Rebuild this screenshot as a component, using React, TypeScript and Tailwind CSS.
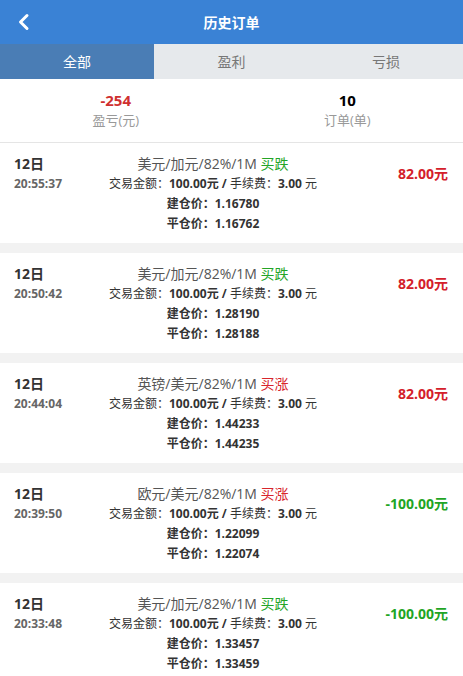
import React from 'react';

type Order = {
  time: string;
  pair: string;
  dir: '买跌' | '买涨';
  open: string;
  close: string;
  result: string;
  win: boolean;
};

const orders: Order[] = [
  { time: '20:55:37', pair: '美元/加元/82%/1M', dir: '买跌', open: '1.16780', close: '1.16762', result: '82.00元', win: true },
  { time: '20:50:42', pair: '美元/加元/82%/1M', dir: '买跌', open: '1.28190', close: '1.28188', result: '82.00元', win: true },
  { time: '20:44:04', pair: '英镑/美元/82%/1M', dir: '买涨', open: '1.44233', close: '1.44235', result: '82.00元', win: true },
  { time: '20:39:50', pair: '欧元/美元/82%/1M', dir: '买涨', open: '1.22099', close: '1.22074', result: '-100.00元', win: false },
  { time: '20:33:48', pair: '美元/加元/82%/1M', dir: '买跌', open: '1.33457', close: '1.33459', result: '-100.00元', win: false },
];

const OrderRow: React.FC<{ o: Order }> = ({ o }) => (
  <div className="flex bg-white pt-[11px] pb-[9px] mb-[10px] leading-[20px] text-[#333]">
    <div className="w-[90px] shrink-0 pl-[14px]">
      <div className="text-[14px] font-bold">12日</div>
      <div className="text-[12px] font-bold text-[#666]">{o.time}</div>
    </div>
    <div className="flex-1 text-center text-[12px]">
      <div className="text-[14px] text-[#555]">
        {o.pair}{' '}
        <span className={o.dir === '买跌' ? 'text-[#23a526]' : 'text-[#d8262c]'}>{o.dir}</span>
      </div>
      <div>
        交易金额：<b>100.00元 / </b>手续费：<b>3.00</b> 元
      </div>
      <div className="font-bold">建仓价：{o.open}</div>
      <div className="font-bold">平仓价：{o.close}</div>
    </div>
    <div className="w-[127px] shrink-0 pr-[15px] text-right">
      <div className={`mt-[10px] text-[14px] font-bold ${o.win ? 'text-[#d4202a]' : 'text-[#1fa524]'}`}>
        {o.result}
      </div>
    </div>
  </div>
);

export default function App() {
  return (
    <div
      className="w-[463px] h-[676px] overflow-hidden bg-[#f2f2f2]"
      style={{ fontFamily: '"Open Sans", "Noto Sans CJK SC", sans-serif' }}
    >
      <header className="h-[44px] bg-[#3a82d5] flex items-center justify-center relative">
        <button className="absolute left-[17px] top-[13px] text-white">
          <svg width="14" height="18" viewBox="0 0 14 18" fill="none">
            <path d="M10 2.5 L3.5 9 L10 15.5" stroke="white" strokeWidth="3" strokeLinecap="round" strokeLinejoin="round" />
          </svg>
        </button>
        <h1 className="text-white text-[14px] font-bold">历史订单</h1>
      </header>

      <div className="flex h-[35px] text-[14px]">
        <div className="w-[154px] bg-[#4a7db5] text-white flex items-center justify-center">全部</div>
        <div className="w-[155px] bg-[#e6e9ec] text-[#777] flex items-center justify-center">盈利</div>
        <div className="flex-1 bg-[#e6e9ec] text-[#777] flex items-center justify-center">亏损</div>
      </div>

      <div className="flex bg-white border-b border-[#e5e5e5] pt-[10px] pb-[13px]">
        <div className="flex-1 text-center">
          <div className="text-[15px] leading-[22px] font-bold text-[#cf3030]">-254</div>
          <div className="text-[13px] leading-[18px] text-[#999]">盈亏(元)</div>
        </div>
        <div className="flex-1 text-center">
          <div className="text-[15px] leading-[22px] font-bold text-black">10</div>
          <div className="text-[13px] leading-[18px] text-[#999]">订单(单)</div>
        </div>
      </div>

      <div>
        {orders.map((o, i) => (
          <OrderRow key={i} o={o} />
        ))}
      </div>
    </div>
  );
}
